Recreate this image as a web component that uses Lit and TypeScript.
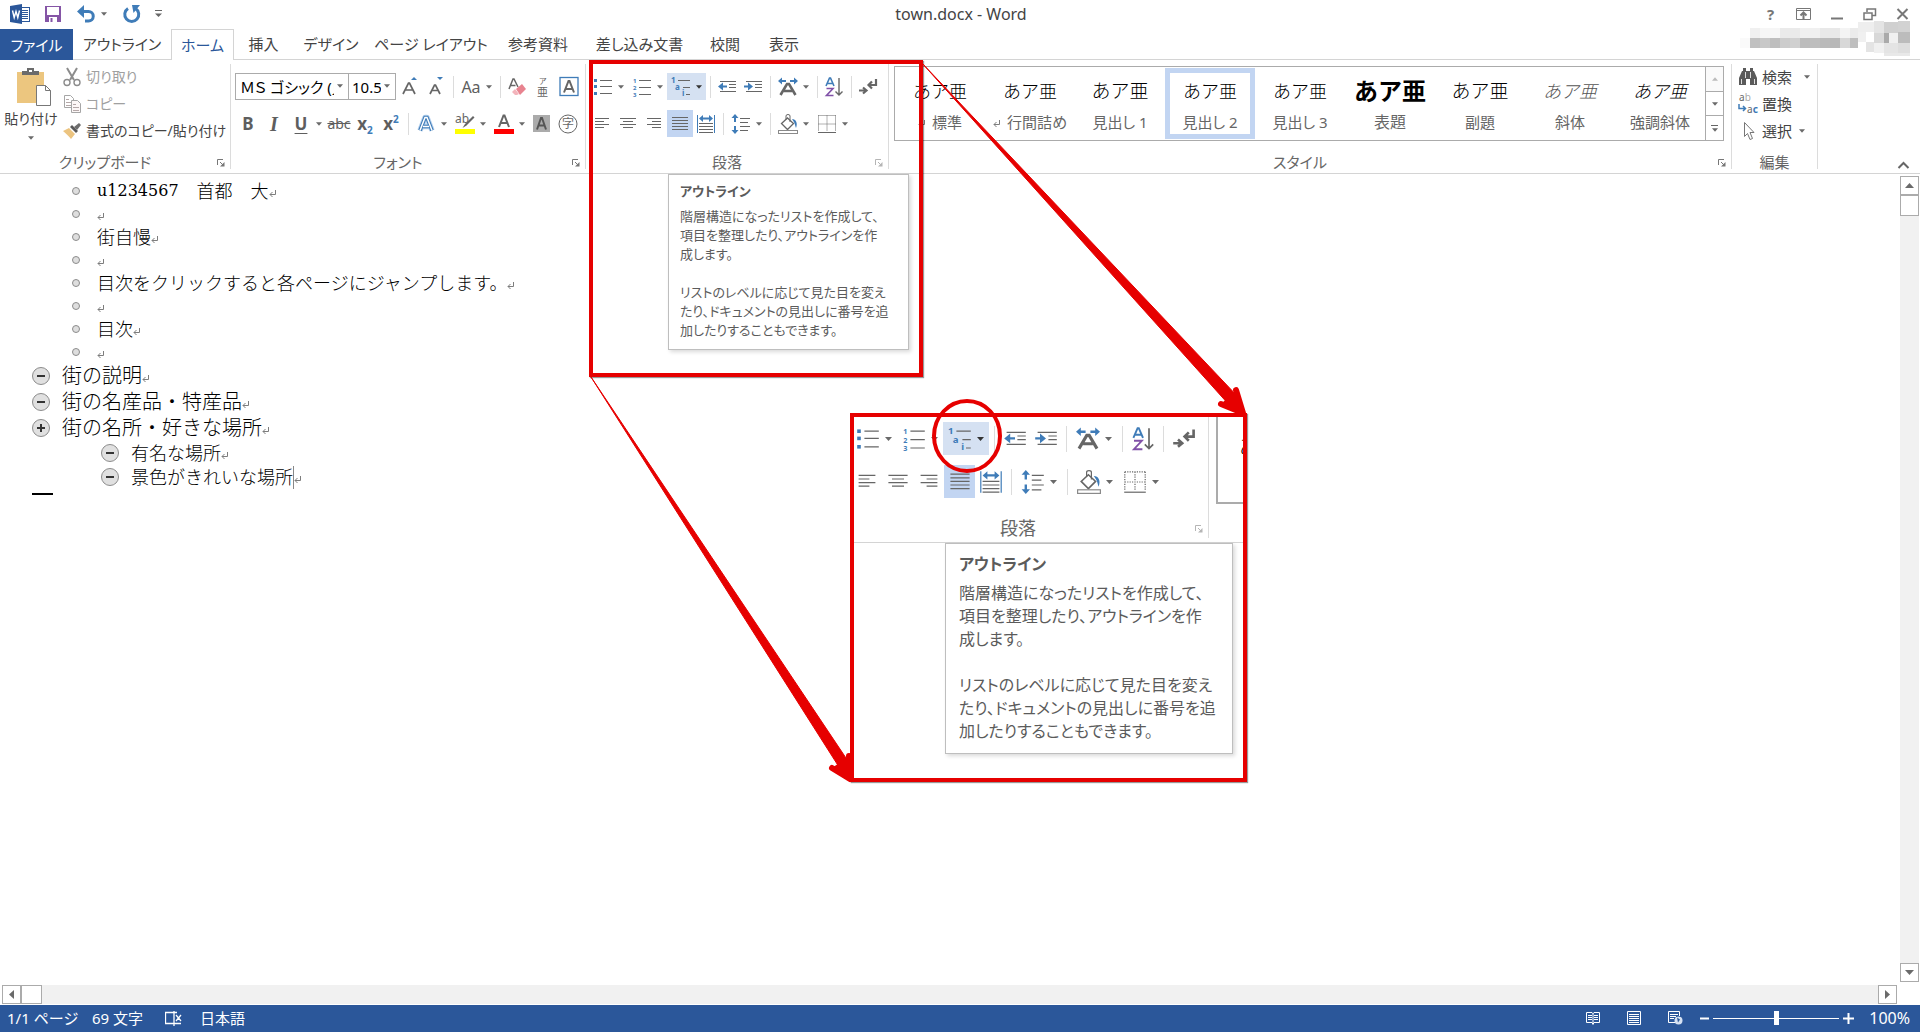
import { LitElement, html, css, svg, nothing, type TemplateResult } from "lit";
import { customElement, property } from "lit/decorators.js";
import { classMap } from "lit/directives/class-map.js";

const G = "#666666";
const B = "#3f7cb8";

/* Glyphs drawn on a 20 x 20 grid. */
const glyphs: Record<string, TemplateResult> = {
  bullets: svg`<g fill=${B}><rect x="1" y="2" width="3" height="3"/><rect x="1" y="8" width="3" height="3"/><rect x="1" y="15" width="3" height="3"/></g>
    <path d="M7 3.500h12M7 9.500h12M7 16.500h12" stroke=${G}/>`,
  numbering: svg`<g fill=${B} font-size="6" font-weight="700"><text x="1" y="6">1</text><text x="1" y="13">2</text><text x="1" y="20">3</text></g>
    <path d="M7 3.500h12M7 10.500h12M7 17.500h12" stroke=${G}/>`,
  outline: svg`<g fill=${B} font-size="8" font-weight="700"><text x="0" y="6">1</text><text x="4" y="13">a</text><text x="11" y="19">i</text></g>
    <path d="M7 3.500h12M12 10.500h7M15 17.500h4" stroke=${G}/>`,
  outdent: svg`<path d="M3 4.500h16M12 7.500h7M12 10.500h7M3 14.500h16" stroke=${G}/>
    <path d="M1 9.500l5-4v3h4v2H6v3z" fill=${B}/>`,
  indent: svg`<path d="M3 4.500h16M12 7.500h7M12 10.500h7M3 14.500h16" stroke=${G}/>
    <path d="M10 9.500L5 5.500v3H1v2h4v3z" fill=${B}/>`,
  asian: svg`<path d="M0 4l4-3.500v2.500h4v2H4v2.500zM20 4l-4-3.500v2.500h-4v2h4v2.500z" fill=${B}/>
    <path d="M2.500 18L9 7h2l6.500 11M6 14h8" stroke=${G} stroke-width="2.600" fill="none"/>`,
  sort: svg`<path d="M2 9L5.500 1h1L10 9M3.500 6.500h5" stroke=${B} stroke-width="1.600" fill="none"/>
    <path d="M2.500 11.500h6.500l-6.500 7h7" stroke="#8151a8" stroke-width="1.600" fill="none"/>
    <path d="M15 1v17M11.500 14.500l3.500 3.500 3.500-3.500" stroke=${G} stroke-width="1.400" fill="none"/>`,
  marks: svg`<path d="M18 2v6h-6M14 4.500L10.500 8l3.500 3.500" stroke=${G} stroke-width="2.200" fill="none"/>
    <path d="M1 13.500h7M5 10.500l3.500 3-3.500 3" stroke=${G} stroke-width="2.200" fill="none"/>`,
  left: svg`<path d="M3 4.500h14M3 7.500h9M3 10.500h14M3 13.500h9" stroke=${G}/>`,
  center: svg`<path d="M2 4.500h16M5 7.500h10M2 10.500h16M5 13.500h10" stroke=${G}/>`,
  right: svg`<path d="M3 4.500h14M8 7.500h9M3 10.500h14M8 13.500h9" stroke=${G}/>`,
  justify: svg`<path d="M2 3.500h16M2 6.500h16M2 9.500h16M2 12.500h16M2 15.500h16" stroke=${G}/>`,
  distribute: svg`<path d="M1.500 1v18M18.500 1v18" stroke=${B}/>
    <path d="M3 4.500l4-3.500v2.500h6V1l4 3.500L13 8V5.500H7V8z" fill=${B}/>
    <path d="M3 9.500h14M3 12.500h14M3 15.500h14M3 18.500h14" stroke=${G}/>`,
  spacing: svg`<path d="M4 0l3.500 4H5v4H3V4H.500zM4 20l3.500-4H5v-4H3v4H.500z" fill=${B}/>
    <path d="M9 4.500h10M9 8.500h8M9 12.500h10M9 16.500h8" stroke=${G}/>`,
  fill: svg`<path d="M9.500 4l6 5.500-6 6-6-6z" fill="#fff" stroke=${G} stroke-width="1.300"/>
    <path d="M8 5.500V2a2 1.500 0 0 1 4 0v6" fill="none" stroke=${G}/>
    <path d="M14 5c4 0 6 4 4 9-1-3-1-5-4-9z" fill=${B}/>
    <rect x=".5" y="16.500" width="19" height="3" fill="#fff" stroke="#8a8a8a"/>`,
  borders: svg`<path d="M1.500 1.500h17M1.500 10h17M1.500 1.500v16M10 1.500v16M18.500 1.500v16" stroke=${G} stroke-dasharray="1 1" fill="none"/>
    <path d="M1 18.500h18" stroke=${G}/>`,
  grow: svg`<path d="M3 17L8.500 6h1L15 17M5 13h8" stroke=${G} stroke-width="1.700" fill="none"/><path d="M11 3l3-3 3 3z" fill=${B}/>`,
  shrink: svg`<path d="M4 17L8.500 8h1L14 17M6 13.500h6" stroke=${G} stroke-width="1.700" fill="none"/><path d="M11 0l3 3 3-3z" fill=${B}/>`,
  eraser: svg`<path d="M2 12L6 2h1l4 8M3.500 8.500h5" stroke=${G} stroke-width="1.500" fill="none"/>
    <path d="M9 12l6-5 4 5-6 6z" fill="#e8838f"/><path d="M5 15l3-3 4 5-2 1H8z" fill="#f3b4bb"/>`,
  ruby: svg`<text x="6" y="7" font-size="8" fill=${G}>ア</text><text x="4" y="19" font-size="11" fill=${G}>亜</text>`,
  boxed: svg`<rect x="1" y=".5" width="18" height="18" fill="none" stroke=${B} stroke-width="1.300"/>
    <path d="M5 15.500L9.500 4h1L15 15.500M6.500 12h7" stroke=${G} stroke-width="2" fill="none"/>`,
  effect: svg`<path d="M4 16.500L9 3.500h2l5 13M7 12.500h6" stroke="#b9d3ef" stroke-width="5.500" stroke-linejoin="round" fill="none"/>
    <path d="M4 16.500L9 3.500h2l5 13M7 12.500h6" stroke=${B} stroke-width="3.600" fill="none"/>
    <path d="M4 16.500L9 3.500h2l5 13M7 12.500h6" stroke="#fff" stroke-width="1.500" fill="none"/>`,
  marker: svg`<text x="0" y="9" font-size="12" fill=${G}>ab</text><path d="M18 2l1.500 1.500-8 8-4 2.500 2.500-4z" fill=${G}/>
    <rect x="0" y="15" width="20" height="5" fill="#ffff00"/>`,
  color: svg`<path d="M5 13L9.500 1.500h1L15 13M6.500 9h7" stroke=${G} stroke-width="2" fill="none"/><rect x="0" y="15" width="20" height="5" fill="#ff0000"/>`,
  shade: svg`<rect x="1" y="1" width="17" height="17" fill="#ababab"/><path d="M5 15.500L9 4h1l4 11.500M6.500 11.500h6" stroke="#555" stroke-width="2" fill="none"/>`,
  enclose: svg`<circle cx="10" cy="10" r="9" fill="none" stroke=${G}/><text x="4" y="14" font-size="12" fill=${G}>字</text>`,
  cut: svg`<path d="M5 1l7 12M15 1L8 13" stroke="#8c8c8c" stroke-width="2" fill="none"/>
    <circle cx="5" cy="15.500" r="3" fill="none" stroke="#8c8c8c" stroke-width="1.400"/><circle cx="15" cy="15.500" r="3" fill="none" stroke="#8c8c8c" stroke-width="1.400"/>`,
  copy: svg`<path d="M2.500 1.500h6l3 3v9h-9z" fill="#fff" stroke="#a6a6a6"/><path d="M4 5.500h3M4 8.500h5M4 11.500h5" stroke="#b5a8a8"/>
    <path d="M9.500 6.500h6l3 3v9h-9z" fill="#fdf7f7" stroke="#a6a6a6"/><path d="M11 10.500h3M11 13.500h6M11 16.500h6" stroke="#b5a8a8"/>`,
  painter: svg`<path d="M1 10l6-3 6 6-4 5c-2-3-5-5-8-8z" fill="#ecc480"/><path d="M8 6l2-2 6 6-2 2z" fill="#595959"/><path d="M12 6l5-4 2 2-4 5z" fill="#6d6d6d"/>`,
  find: svg`<path d="M5 1h3v3h4V1h3v3h1l3 7v7h-7v-6H8v6H1v-7l3-7h1z" fill="#5a5a5a"/><path d="M7.500 5v6M12.500 5v6M3.500 12v5M16.500 12v5" stroke="#fff" stroke-width=".8"/>`,
  replace: svg`<text x="1" y="7" font-size="10" fill=${G}>a<tspan fill="#aaa">b</tspan></text>
    <text x="9" y="19" font-size="10" fill=${G}>a<tspan fill=${B} font-weight="700">c</tspan></text>
    <path d="M1 10v4.500h6M5 12l2.500 2.500L5 17" stroke=${B} stroke-width="1.500" fill="none"/>`,
  pointer: svg`<path d="M6.500 1.500v14l3-3 2.500 6 2.500-1-2.500-6h4z" fill="#fff" stroke="#777"/>`,
  word: svg`<rect x="9.500" y="3.500" width="10" height="14" fill="#fff" stroke="#2b579a"/><path d="M12 6.500h6M12 8.500h6M12 10.500h6M12 12.500h6M12 14.500h6" stroke="#2b579a"/>
    <path d="M0 2l12-2v20L0 18z" fill="#2b579a"/><path d="M2.500 6.500l1.700 7L6 7.500l1.800 6 1.700-7" stroke="#fff" stroke-width="1.400" fill="none"/>`,
  save: svg`<path d="M2 2h16v16H2z" fill="#8555a6"/><path d="M4 3h12v8H4z" fill="#fff"/><path d="M6 13h8v5H6z" fill="#fff"/><path d="M7.500 14h2v4h-2z" fill="#8555a6"/>`,
  undo: svg`<path d="M4 7.500h8.500a4.500 4.500 0 0 1 0 9.500H9" stroke=${B} stroke-width="3" fill="none"/><path d="M1 7.500L8 1v13z" fill=${B}/>`,
  redo: svg`<path d="M6 4.500a7 7 0 1 0 7.500 0" stroke=${B} stroke-width="3" fill="none"/><path d="M10 1h8l-6.500 8z" fill=${B}/>`,
};

const icon = (name: string) =>
  html`<svg class="icon" viewBox="0 0 20 20" aria-hidden="true">${glyphs[name]}</svg>`;
const caret = html`<svg class="caret" viewBox="0 0 7 4" aria-hidden="true"><path d="M0 0h7L3.500 4z" fill="currentColor"/></svg>`;
const launcher = (label: string) => html`<button class="launcher" aria-label=${label}>
  <svg viewBox="0 0 9 9" aria-hidden="true"><path d="M1.500 7V1.500H7M4 4l3 3" stroke="currentColor" fill="none"/><path d="M8.500 4v4.500H4z" fill="currentColor"/></svg>
</button>`;
const returnMark = html`<svg class="ret" viewBox="0 0 8 8" aria-hidden="true"><path d="M6.500 0v4.500H1M3.500 2L1 4.500 3.500 7" fill="none" stroke="#7d7d7d"/></svg>`;
const sep = html`<span class="sep"></span>`;

type Tool = { name: string; label: string; split?: boolean; state?: string } | "sep";

const tool = (t: Tool) =>
  t === "sep"
    ? sep
    : html`<button class=${classMap({ cell: true, split: !!t.split, hot: t.state === "hot", on: t.state === "on" })} aria-label=${t.label}>
        ${icon(t.name)}${t.split ? caret : nothing}
      </button>`;

const ribbonStyles = css`
  * { box-sizing: border-box; }
  button, select, input {
    font: inherit; color: inherit; background: none; border: 0; padding: 0; margin: 0; border-radius: 0;
  }
  .row { display: flex; align-items: center; height: var(--row, 27px); }
  .cell {
    display: flex; align-items: center; justify-content: center; flex: none;
    width: var(--cell, 26px); height: 100%; color: #5e5e5e;
  }
  .split { width: var(--split, 39px); gap: 5px; }
  .hot { background: #d5e1f2; color: #333; }
  .on { background: #c2d5f2; }
  .icon { width: var(--icon, 20px); height: var(--icon, 20px); flex: none; display: block; overflow: visible; }
  .caret { width: 6px; height: 4px; flex: none; display: block; color: #6a6a6a; }
  .hot .caret { color: #333; }
  .sep { flex: none; width: var(--sep, 8px); height: 22px; display: flex; justify-content: center; }
  .sep::before { content: ""; width: 1px; background: #dcdcdc; }
  .caption {
    display: grid; grid-template-columns: 1fr auto 1fr 20px; align-items: center;
    height: 20px; margin-top: auto; margin-bottom: 1px; color: #666; white-space: nowrap;
  }
  .caption > span { grid-column: 2; }
  .launcher { grid-column: 4; justify-self: end; width: 9px; height: 9px; margin-right: 5px; color: #777; display: flex; }
  .launcher svg { width: 9px; height: 9px; }
`;

const paragraphRows: Tool[][] = [
  [
    { name: "bullets", label: "箇条書き", split: true },
    { name: "numbering", label: "段落番号", split: true },
    { name: "outline", label: "アウトライン", split: true, state: "hot" },
    "sep",
    { name: "outdent", label: "インデントを減らす" },
    { name: "indent", label: "インデントを増やす" },
    "sep",
    { name: "asian", label: "拡張書式", split: true },
    "sep",
    { name: "sort", label: "並べ替え" },
    "sep",
    { name: "marks", label: "編集記号の表示" },
  ],
  [
    { name: "left", label: "左揃え" },
    { name: "center", label: "中央揃え" },
    { name: "right", label: "右揃え" },
    { name: "justify", label: "両端揃え", state: "on" },
    { name: "distribute", label: "均等割り付け" },
    "sep",
    { name: "spacing", label: "行間", split: true },
    "sep",
    { name: "fill", label: "塗りつぶし", split: true },
    { name: "borders", label: "罫線", split: true },
  ],
];

/* Paragraph tools with the open outline tooltip; "large" is the magnified view. */
@customElement("paragraph-group")
export class ParagraphGroup extends LitElement {
  @property({ type: Boolean, reflect: true }) large = false;

  static styles = [
    ribbonStyles,
    css`
      :host {
        display: flex; flex-direction: column; position: relative; flex: none;
        width: 302px; padding: 13px 0 0 3px;
        --tip-x: 82px; --tip-w: 241px; --tip-h: 176px; --tip-font: 13px; --tip-line: 19px; --tip-pad: 7px 11px;
      }
      :host([large]) {
        width: 360px; padding-top: 5px; font-size: 18px;
        --row: 33px; --cell: 31px; --split: 46px; --sep: 10px; --icon: 24px;
        --tip-x: 97px; --tip-w: 288px; --tip-h: 211px; --tip-font: 16px; --tip-line: 23px; --tip-pad: 9px 13px;
      }
      .rows { display: flex; flex-direction: column; gap: 10px; }
      :host([large]) .sep { height: 26px; }
      :host([large]) .caret { width: 7px; }
      :host([large]) .caption { height: 26px; }
      .caption { margin-left: -3px; }
      .launcher { color: #b5b5b5; }
      .tip {
        position: absolute; top: 100%; left: var(--tip-x); z-index: 2; margin-top: 1px;
        width: var(--tip-w); height: var(--tip-h); padding: var(--tip-pad);
        background: #fff; border: 1px solid #bebebe; box-shadow: 2px 2px 4px rgba(0, 0, 0, 0.15);
        color: #5b5b5b; font-size: var(--tip-font); line-height: var(--tip-line); white-space: nowrap;
      }
      .tip h2, .tip p { margin: 0; font-size: inherit; }
      .tip h2 { margin-bottom: 6px; }
      .tip p + p { margin-top: var(--tip-line); }
    `,
  ];

  render() {
    return html`
      <div class="rows">${paragraphRows.map((r) => html`<div class="row">${r.map(tool)}</div>`)}</div>
      <div class="caption"><span>段落</span>${launcher("段落の設定")}</div>
      <div class="tip" role="tooltip">
        <h2>アウトライン</h2>
        <p>階層構造になったリストを作成して、<br />項目を整理したり、アウトラインを作<br />成します。</p>
        <p>リストのレベルに応じて見た目を変え<br />たり、ドキュメントの見出しに番号を追<br />加したりすることもできます。</p>
      </div>
    `;
  }
}

const tabs: [string, number][] = [
  ["ファイル", 73], ["アウトライン", 98], ["ホーム", 63], ["挿入", 59], ["デザイン", 76],
  ["ページ レイアウト", 124], ["参考資料", 90], ["差し込み文書", 113], ["校閲", 58], ["表示", 60],
];

const galleryStyles: [string, string][] = [
  ["標準", "marked"], ["行間詰め", "marked"], ["見出し 1", "big"], ["見出し 2", "chosen"], ["見出し 3", ""],
  ["表題", "title"], ["副題", "big"], ["斜体", "soft slant"], ["強調斜体", "slant"],
];

type Line = { kind: string; text: string; latin?: string; cursor?: boolean };
const lines: Line[] = [
  { kind: "body", latin: "u1234567", text: "　首都　大" },
  { kind: "body", text: "" },
  { kind: "body", text: "街自慢" },
  { kind: "body", text: "" },
  { kind: "body", text: "目次をクリックすると各ページにジャンプします。" },
  { kind: "body", text: "" },
  { kind: "body", text: "目次" },
  { kind: "body", text: "" },
  { kind: "head minus", text: "街の説明" },
  { kind: "head minus", text: "街の名産品・特産品" },
  { kind: "head plus", text: "街の名所・好きな場所" },
  { kind: "sub minus", text: "有名な場所" },
  { kind: "sub minus", text: "景色がきれいな場所", cursor: true },
];

/* Pixelated account name and portrait: x, y, width, height, grey level. */
const mosaic: [number, number, number, number, number][] = [
  [10, 9, 10, 10, 240], [20, 9, 20, 10, 246], [40, 9, 20, 10, 234], [60, 9, 20, 10, 240], [80, 9, 20, 10, 232], [100, 9, 10, 10, 244], [110, 9, 8, 10, 235],
  [0, 19, 10, 10, 250], [10, 19, 10, 10, 192], [20, 19, 10, 10, 200], [30, 19, 10, 10, 190], [40, 19, 10, 10, 204], [50, 19, 10, 10, 208], [60, 19, 10, 10, 188],
  [70, 19, 10, 10, 190], [80, 19, 10, 10, 186], [90, 19, 10, 10, 184], [100, 19, 10, 10, 216], [110, 19, 8, 10, 190],
  [118, 3, 16, 10, 238], [134, 2, 10, 12, 228], [144, 3, 14, 11, 208], [158, 2, 12, 11, 210], [134, 14, 10, 10, 216], [144, 14, 5, 10, 170], [149, 14, 9, 10, 240],
  [158, 13, 12, 11, 188], [118, 13, 8, 10, 240], [126, 23, 8, 10, 228], [134, 24, 10, 10, 240], [144, 24, 14, 10, 228], [158, 24, 12, 10, 222], [144, 34, 26, 3, 232],
];

@customElement("app-root")
export class AppRoot extends LitElement {
  static styles = [
    ribbonStyles,
    css`
      :host {
        display: flex; flex-direction: column; position: relative; min-height: 100vh; overflow: hidden;
        background: #fff; color: #444;
        font-family: "Noto Sans", "Noto Sans CJK JP", sans-serif; font-size: 15px; line-height: 20px;
        font-feature-settings: "palt";
      }
      .titlebar { display: grid; grid-template-columns: 1fr auto 1fr; align-items: center; height: 29px; padding: 0 8px 2px 10px; }
      .quick { display: flex; align-items: center; height: 26px; }
      .quick .icon { margin-right: 13px; }
      .quick .undo .icon { margin-right: 5px; }
      .quick button { display: flex; align-items: center; margin-right: 15px; }
      .quick button:first-of-type { margin-right: 0; }
      .quick .redo { margin-right: 0; }
      .title { font-size: 16px; margin: 0; font-weight: 400; }
      .window { display: flex; justify-content: flex-end; gap: 14px; align-items: center; height: 26px; }
      .window button { width: 19px; height: 20px; font-weight: 700; color: #777; }
      .window svg { width: 19px; height: 20px; display: block; }

      .tabs { display: flex; height: 31px; border-bottom: 1px solid #d4d4d4; }
      .tab {
        display: flex; align-items: center; justify-content: center; flex: none; white-space: nowrap;
        color: #444; text-decoration: none;
      }
      .tab.file { background: #2b579a; color: #fff; height: 31px; }
      .tab.current { height: 31px; background: #fff; border: 1px solid #d4d4d4; border-bottom: 0; color: #2b579a; }
      .account { margin: -10px 10px 0 auto; width: 170px; height: 38px; flex: none; }

      .ribbon { display: flex; height: 114px; border-bottom: 1px solid #d4d4d4; }
      .group { display: flex; flex-direction: column; flex: none; }
      .bar { flex: none; width: 1px; margin: 4px 0; background: #dcdcdc; }
      .clipboard { width: 230px; }
      .clip-body { display: flex; padding-top: 3px; }
      .paste { flex: none; width: 62px; display: flex; flex-direction: column; align-items: center; color: #444; padding-top: 4px; font-size: 14px; white-space: nowrap; }
      .paste .board { width: 36px; height: 40px; margin-bottom: 2px; margin-left: 8px; }
      .paste .caret { margin-top: 7px; }
      .stack { display: flex; flex-direction: column; font-size: 14px; }
      .line { display: flex; align-items: center; height: 27px; gap: 4px; color: #444; white-space: nowrap; }
      .line.off { color: #a0a0a0; }
      .font { width: 354px; padding: 13px 0 0 4px; gap: 10px; }
      .font .caption { margin-left: -4px; margin-top: auto; }
      .combo {
        display: flex; align-items: center; position: relative; height: 27px; border: 1px solid #ababab; color: #000; flex: none;
      }
      .combo select { appearance: none; width: 100%; height: 100%; padding: 0 14px 0 4px; font-size: 15px; text-overflow: clip; outline: none; }
      .combo .caret { position: absolute; right: 5px; top: 10px; pointer-events: none; }
      .face { width: 114px; }
      .size { width: 47px; border-left: 0; margin-right: 1px; }
      .size select { padding-left: 3px; }
      .letter { font-size: 17px; font-weight: 700; }
      .letter.i { font-family: "Liberation Serif", serif; font-style: italic; font-size: 20px; }
      .letter u { width: 20px; text-align: center; text-underline-offset: 3px; text-decoration-thickness: 1px; }
      .letter.s { font-size: 14px; font-weight: 400; text-decoration: line-through; }
      .letter sub, .letter sup { font-size: 10px; color: #3f7cb8; line-height: 0; }
      .case { font-size: 16px; }

      .styles { width: 842px; padding: 6px 0 0 5px; }
      .styles .caption { margin-left: -5px; }
      .gallery { display: flex; width: 830px; height: 75px; border: 1px solid #ababab; }
      .style { width: 90px; flex: none; display: flex; flex-direction: column; align-items: center; padding-top: 9px; color: #666; border: 0 solid transparent; border-width: 0 4px; white-space: nowrap; }
      .sample { color: #000; font-size: 18px; line-height: 30px; height: 36px; font-feature-settings: normal; font-weight: 300; }
      .style.big .sample { font-size: 19px; }
      .style.title .sample { font-size: 24px; font-weight: 700; }
      .style.slant .sample { font-style: italic; }
      .style.soft .sample { color: #555; }
      .style.chosen { border: 5px solid #c2d5f2; padding-top: 3px; margin: 1px 0; }
      .style .ret { margin-right: 6px; }
      .pager { width: 18px; flex: none; display: flex; flex-direction: column; border-left: 1px solid #ababab; }
      .pager button { flex: 1; display: flex; flex-direction: column; gap: 2px; align-items: center; justify-content: center; color: #666; }
      .pager button + button { border-top: 1px solid #ababab; }
      .pager .up { background: #fafafa; }
      .pager .up .caret { color: #bbb; transform: scaleY(-1); }
      .rule { width: 7px; height: 1px; background: #666; }
      .edit { width: 85px; padding: 3px 0 0 6px; }
      .edit .caption { margin-left: -6px; margin-top: auto; grid-template-columns: 1fr auto 1fr; }
      .edit .line .caret { margin-left: 8px; }
      .edit .line.near .caret { margin-left: 3px; }
      .collapse { margin-left: auto; margin-right: 10px; align-self: flex-end; width: 13px; height: 20px; }
      .collapse svg { width: 13px; height: 8px; }

      .work { flex: 1; display: flex; }
      .page { flex: 1; padding-top: 5px; margin: 0; color: #000; font-weight: 300; font-feature-settings: normal; }
      .text { display: flex; align-items: center; white-space: pre; }
      .text.body { height: 23px; padding-left: 72px; font-size: 18px; }
      .text.head { height: 26px; padding-left: 32px; font-size: 20px; }
      .text.sub { height: 24px; padding-left: 101px; font-size: 18px; }
      .latin { font-family: "DejaVu Serif", serif; font-size: 16px; font-weight: 400; }
      .dot { width: 8px; height: 8px; border: 1px solid #8c8c8c; border-radius: 50%; background: #dedede; margin-right: 17px; flex: none; }
      .knob { width: 18px; height: 18px; border: 1px solid #8c8c8c; border-radius: 50%; background: #e0e0e0; margin-right: 12px; flex: none; display: block; }
      .ret { width: 8px; height: 8px; display: inline-block; flex: none; }
      .text .ret { margin-top: 6px; }
      .ibeam { width: 1px; height: 23px; background: #888; }
      .end { width: 21px; height: 2px; background: #000; margin: 4px 0 0 32px; }

      .vscroll { width: 20px; padding: 2px 1px 3px 0; display: flex; flex-direction: column; }
      .hscroll { height: 20px; padding: 0 23px 1px 2px; display: flex; }
      .arrow, .thumb { flex: none; border: 1px solid #ababab; background: #fff; display: flex; align-items: center; justify-content: center; width: 19px; height: 19px; }
      .vscroll .thumb { height: 21px; }
      .hscroll .thumb { width: 21px; }
      .track { flex: 1; background: #f1f1f1; }
      .arrow svg { width: 9px; height: 9px; }

      .status { height: 27px; background: #2b579a; color: #fff; display: flex; align-items: center; padding: 0 10px 1px 7px; }
      .status .pages { width: 85px; }
      .status .count { width: 73px; }
      .status svg { width: 18px; height: 16px; display: block; }
      .status .lang { margin-left: 17px; }
      .views { margin-left: auto; display: flex; gap: 23px; margin-right: 15px; }
      .zoomer { width: 11px; height: 20px; display: flex; align-items: center; }
      .zoomer svg { width: 11px; height: 11px; }
      .slider { appearance: none; width: 126px; height: 20px; margin: 0 4px 0 3px; outline: none; }
      .slider::-webkit-slider-runnable-track { height: 1px; background: #fff; }
      .slider::-webkit-slider-thumb { appearance: none; width: 5px; height: 14px; margin-top: -7px; background: #fff; }
      .percent { font-size: 16px; width: 56px; text-align: right; }

      .frame { position: absolute; left: 589px; top: 60px; width: 334px; height: 317px; border: 4px solid #e60000; box-shadow: 1px 1px 1px rgba(0, 0, 0, 0.4); z-index: 3; pointer-events: none; }
      .inset { position: absolute; left: 850px; top: 413px; width: 397px; height: 369px; border: 4px solid #e60000; background: #fff; overflow: hidden; z-index: 3; box-shadow: 1px 1px 1px rgba(0, 0, 0, 0.4); }
      .inset-ribbon { display: flex; height: 126px; margin-left: -6px; border-bottom: 1px solid #d4d4d4; }
      .inset .bar { margin: 0 7px 4px 0; }
      .fragment { flex: none; width: 108px; height: 87px; border: 2px solid #ababab; border-top: 0; padding: 18px 0 0 21px; color: #000; font-size: 22px; font-weight: 300; }
      .marks { position: absolute; left: 0; top: 0; width: 1300px; height: 800px; z-index: 4; pointer-events: none; }
    `,
  ];

  private galleryItem([name, kind]: [string, string]) {
    return html`<button class="style ${kind}">
      <span class="sample">あア亜</span><span>${kind === "marked" ? returnMark : nothing}${name}</span>
    </button>`;
  }

  private textLine(l: Line) {
    const lead =
      l.kind === "body"
        ? html`<span class="dot"></span>`
        : html`<svg class="knob" viewBox="0 0 16 16" aria-hidden="true"><path d=${l.kind.includes("plus") ? "M4 8h8M8 4v8" : "M4 8h8"} stroke="#333" stroke-width="2"/></svg>`;
    const latin = l.latin ? html`<span class="latin">${l.latin}</span>` : nothing;
    const beam = l.cursor ? html`<span class="ibeam"></span>` : nothing;
    return html`<div class="text ${l.kind}">${lead}${latin}<span>${l.text}</span>${beam}${returnMark}</div>`;
  }

  private arrow(label: string, d: string) {
    return html`<button class="arrow" aria-label=${label}><svg viewBox="0 0 9 9"><path d=${d} fill="#6a6a6a"/></svg></button>`;
  }

  render() {
    return html`
      <header class="titlebar">
        <div class="quick">
          ${icon("word")}
          <button aria-label="上書き保存">${icon("save")}</button>
          <button class="undo" aria-label="元に戻す">${icon("undo")}${caret}</button>
          <button class="redo" aria-label="やり直し">${icon("redo")}</button>
          <button aria-label="クイック アクセス ツール バーのユーザー設定"><svg width="7" height="8" viewBox="0 0 7 8"><path d="M0 .5h7" stroke="#666"/><path d="M0 3.500h7L3.500 7z" fill="#666"/></svg></button>
        </div>
        <h1 class="title">town.docx - Word</h1>
        <div class="window">
          <button aria-label="ヘルプ">?</button>
          <button aria-label="リボンの表示オプション"><svg viewBox="0 0 19 20"><path d="M2.500 4.500h14v11h-14zM2.500 6.500h14" fill="none" stroke="#777"/><path d="M9.500 15V9M6.500 11.500l3-3 3 3" fill="none" stroke="#777" stroke-width="2"/></svg></button>
          <button aria-label="最小化"><svg viewBox="0 0 19 20"><path d="M4 14.500h12" stroke="#777" stroke-width="2"/></svg></button>
          <button aria-label="元のサイズに戻す"><svg viewBox="0 0 19 20"><path d="M4 9h8v6.500H4zM7 8V5h8.500v6.500H12" fill="none" stroke="#777" stroke-width="1.500"/></svg></button>
          <button aria-label="閉じる"><svg viewBox="0 0 19 20"><path d="M4.500 5l10 10M14.500 5l-10 10" stroke="#777" stroke-width="2"/></svg></button>
        </div>
      </header>
      <nav class="tabs">
        ${tabs.map(
          ([name, w], i) =>
            html`<a href="#" class=${classMap({ tab: true, file: i === 0, current: i === 2 })} style="width:${w}px">${name}</a>`,
        )}
        <svg class="account" viewBox="0 0 170 38" aria-hidden="true">
          ${mosaic.map(([x, y, w, h, g]) => svg`<rect x=${x} y=${y} width=${w} height=${h} fill="rgb(${g},${g},${g})"/>`)}
        </svg>
      </nav>
      <section class="ribbon">
        <div class="group clipboard">
          <div class="clip-body">
            <button class="paste">
              <svg class="board" viewBox="0 0 36 40" aria-hidden="true">
                <path d="M0 5h27v31H0z" fill="#ecc67f"/><path d="M5 8V4h5V1h7v3h5v4z" fill="#6b6b6b"/><path d="M12 3h3v2h-3z" fill="#fff"/>
                <path d="M19.500 18.500h9l5 5v15h-14z" fill="#fff" stroke="#777"/><path d="M28.500 18.500v5h5" fill="none" stroke="#777"/>
              </svg>
              <span>貼り付け</span>${caret}
            </button>
            <div class="stack">
              <button class="line off">${icon("cut")}切り取り</button>
              <button class="line off">${icon("copy")}コピー</button>
              <button class="line">${icon("painter")}書式のコピー/貼り付け</button>
            </div>
          </div>
          <div class="caption"><span>クリップボード</span>${launcher("クリップボードの設定")}</div>
        </div>
        <span class="bar"></span>
        <div class="group font">
          <div class="row">
            <label class="combo face"><select aria-label="フォント"><option>ＭＳ ゴシック (見出し)</option></select>${caret}</label>
            <label class="combo size"><select aria-label="フォント サイズ"><option>10.5</option></select>${caret}</label>
            ${tool({ name: "grow", label: "フォントの拡大" })}${tool({ name: "shrink", label: "フォントの縮小" })}${sep}
            <button class="cell split case" aria-label="文字種の変換">Aa${caret}</button>${sep}
            ${tool({ name: "eraser", label: "書式のクリア" })}${tool({ name: "ruby", label: "ルビ" })}${tool({ name: "boxed", label: "囲み線" })}
          </div>
          <div class="row">
            <button class="cell letter">B</button>
            <button class="cell letter i">I</button>
            <button class="cell split letter"><u>U</u>${caret}</button>
            <button class="cell letter s">abc</button>
            <button class="cell letter"><span>x<sub>2</sub></span></button>
            <button class="cell letter"><span>x<sup>2</sup></span></button>
            ${sep}${tool({ name: "effect", label: "文字の効果", split: true })}${tool({ name: "marker", label: "蛍光ペンの色", split: true })}${tool({ name: "color", label: "フォントの色", split: true })}${tool({ name: "shade", label: "文字の網かけ" })}${tool({ name: "enclose", label: "囲い文字" })}
          </div>
          <div class="caption"><span>フォント</span>${launcher("フォントの設定")}</div>
        </div>
        <span class="bar"></span>
        <paragraph-group></paragraph-group>
        <span class="bar"></span>
        <div class="group styles">
          <div class="gallery">
            ${galleryStyles.map((s) => this.galleryItem(s))}
            <div class="pager">
              <button class="up" aria-label="前の行">${caret}</button>
              <button aria-label="次の行">${caret}</button>
              <button aria-label="その他"><span class="rule"></span>${caret}</button>
            </div>
          </div>
          <div class="caption"><span>スタイル</span>${launcher("スタイルの設定")}</div>
        </div>
        <span class="bar"></span>
        <div class="group edit">
          <button class="line">${icon("find")}検索${caret}</button>
          <button class="line">${icon("replace")}置換</button>
          <button class="line near">${icon("pointer")}選択${caret}</button>
          <div class="caption"><span>編集</span></div>
        </div>
        <span class="bar"></span>
        <button class="collapse" aria-label="リボンを折りたたむ"><svg viewBox="0 0 13 8"><path d="M1.500 7l5-5 5 5" fill="none" stroke="#666" stroke-width="2"/></svg></button>
      </section>
      <div class="work">
        <main class="page">
          ${lines.map((l) => this.textLine(l))}
          <div class="end"></div>
        </main>
        <div class="vscroll">
          ${this.arrow("上へ", "M0 7h9L4.500 2z")}<span class="thumb"></span><span class="track"></span>${this.arrow("下へ", "M0 2h9L4.500 7z")}
        </div>
      </div>
      <div class="hscroll">
        ${this.arrow("左へ", "M7 0v9L2 4.500z")}<span class="thumb"></span><span class="track"></span>${this.arrow("右へ", "M2 0v9l5-4.500z")}
      </div>
      <footer class="status">
        <span class="pages">1/1 ページ</span><span class="count">69 文字</span>
        <svg viewBox="0 0 18 16"><path d="M9 2.500H.500v11H9M9 1v15M9 2.500h3M9 13.500h7M11 5l5 6M16 5l-5 6" fill="none" stroke="#fff" stroke-width="1.300"/></svg>
        <span class="lang">日本語</span>
        <div class="views">
          <button aria-label="閲覧モード"><svg viewBox="0 0 18 16"><path d="M2.500 2.500H8l1 1 1-1h5.500v10H10l-1 2-1-2H2.500zM9 3v11M4 5.500h4M4 7.500h4M4 9.500h4M10 5.500h4M10 7.500h4M10 9.500h4" fill="none" stroke="#fff"/></svg></button>
          <button aria-label="印刷レイアウト"><svg viewBox="0 0 18 16"><path d="M2.500 1.500h13v13h-13zM4 4.500h10M4 6.500h10M4 8.500h10M4 10.500h10M4 12.500h10" fill="none" stroke="#fff"/></svg></button>
          <button aria-label="Web レイアウト"><svg viewBox="0 0 18 16"><path d="M9 12.500H2.500v-11h11V6M4 4.500h8M4 6.500h6M4 8.500h4" fill="none" stroke="#fff"/><circle cx="12.500" cy="10.500" r="4" fill="#d6e2f3"/><path d="M11 7.500l3 2-2 3z" fill="#2b579a"/></svg></button>
        </div>
        <button class="zoomer" aria-label="縮小"><svg viewBox="0 0 11 11"><path d="M1 5.500h9" stroke="#fff" stroke-width="2"/></svg></button>
        <input class="slider" type="range" min="0" max="100" value="50" aria-label="ズーム" />
        <button class="zoomer" aria-label="拡大"><svg viewBox="0 0 11 11"><path d="M0 5.500h11M5.500 0v11" stroke="#fff" stroke-width="2"/></svg></button>
        <span class="percent">100%</span>
      </footer>

      <div class="frame"></div>
      <div class="inset">
        <div class="inset-ribbon">
          <paragraph-group large></paragraph-group>
          <span class="bar"></span>
          <div class="fragment">あ</div>
        </div>
      </div>
      <svg class="marks" viewBox="0 0 1300 800" aria-hidden="true">
        <g fill="#e60000" stroke="#e60000" stroke-linejoin="round">
          <path d="M921 62L1231 407l9-8z"/><path d="M591 377L839 767l9-6z"/>
          <path d="M1221 404l22 9-7-23M832 768l18 11-1-23" stroke-width="6" stroke-linecap="round"/>
        </g>
        <ellipse cx="967" cy="436" rx="33" ry="35" fill="none" stroke="#e60000" stroke-width="4"/>
      </svg>
    `;
  }
}
